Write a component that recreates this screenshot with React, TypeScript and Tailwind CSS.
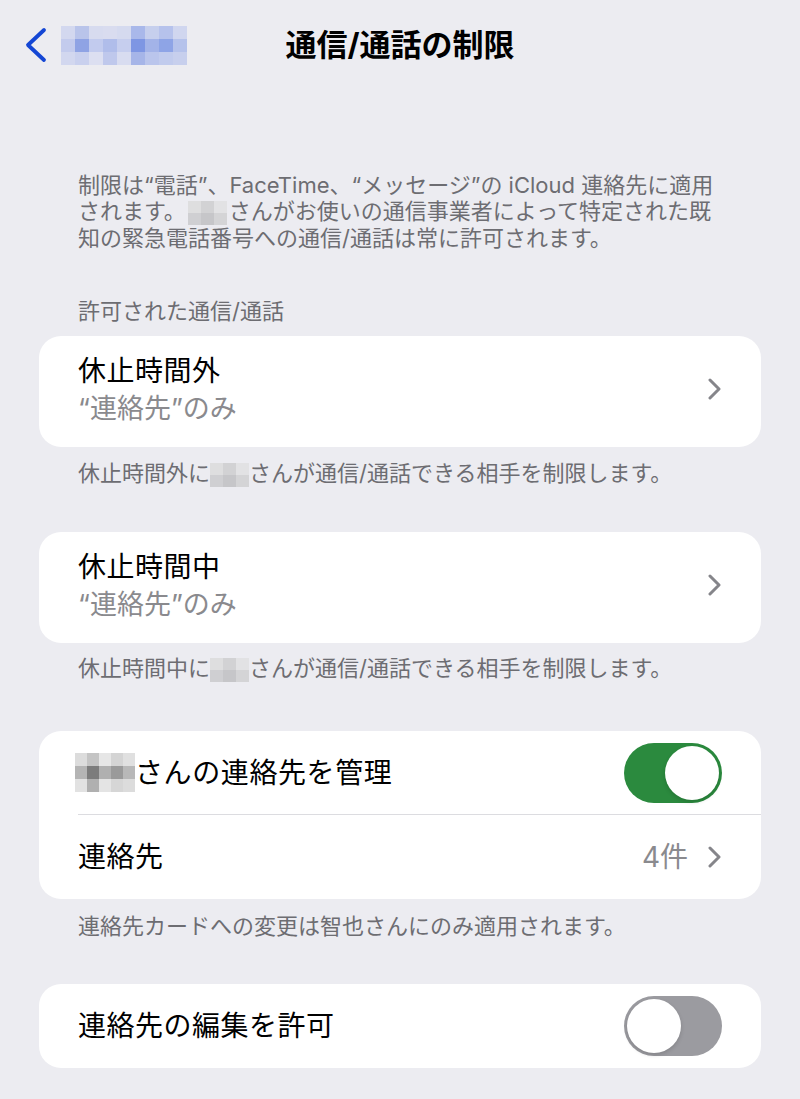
import React from 'react';

// Mosaic blocks used where a person's name is hidden
type Cells = string[][];

const navName: Cells = [
  ['#d3d8ef', '#b9c4ea', '#d7dbef', '#d9dcef', '#d5daef', '#a9b8ea', '#c6cfed', '#b6c2ec', '#d0d6ef'],
  ['#c3cbed', '#8fa3e4', '#c2cbee', '#b0bdea', '#c6ceee', '#7e96e3', '#a3b3e8', '#8ea4e6', '#b5c2eb'],
  ['#d2d7ef', '#c9d0ee', '#dcdff1', '#bfc8ec', '#d8dcf0', '#a6b5e8', '#bac5ec', '#c1cbed', '#c7cfed'],
];

const smallName: Cells = [
  ['#dededf', '#d2d2d4', '#e2e2e4'],
  ['#cfcfd2', '#c6c6c9', '#d4d4d6'],
];

const rowName: Cells = [
  ['#dcdcdc', '#c4c4c4', '#e6e6e6', '#d4d4d4', '#e0e0e0'],
  ['#b4b4b4', '#7c7c7c', '#b0b0b0', '#9a9a9a', '#b8b8b8'],
  ['#e2e2e2', '#b0b0b0', '#e4e4e4', '#d6d6d6', '#dcdcdc'],
];

const Mosaic: React.FC<{ cells: Cells; cw: number; ch: number; className?: string }> = ({ cells, cw, ch, className }) => (
  <span className={`inline-flex flex-col align-middle ${className ?? ''}`}>
    {cells.map((row, i) => (
      <span key={i} className="flex">
        {row.map((c, j) => (
          <span key={j} style={{ width: cw, height: ch, background: c }} />
        ))}
      </span>
    ))}
  </span>
);

const Chevron = () => (
  <svg width="13" height="22" viewBox="0 0 13 22" fill="none">
    <polyline points="2,2 11,11 2,20" stroke="#85858a" strokeWidth="3" strokeLinecap="round" strokeLinejoin="round" />
  </svg>
);

const Toggle: React.FC<{ on: boolean }> = ({ on }) => (
  <div className={`flex h-[60px] w-[98px] items-center rounded-full p-[3px] ${on ? 'justify-end bg-[#2b8a3e]' : 'justify-start bg-[#9b9ba0]'}`}>
    <div className="h-[54px] w-[54px] rounded-full bg-white shadow-[0_2px_4px_rgba(0,0,0,0.15)]" />
  </div>
);

const DowntimeCard: React.FC<{ title: string }> = ({ title }) => (
  <div className="flex items-center justify-between rounded-[22px] bg-white pl-[39px] pr-[40px] pt-[17px] pb-[22px]">
    <div>
      <div className="text-[28px] leading-[36px] tracking-[0.5px] text-black">{title}</div>
      <div className="mt-[4px] text-[27px] leading-[32px] text-[#8a8a8e]">“連絡先”のみ</div>
    </div>
    <Chevron />
  </div>
);

export default function App() {
  return (
    <div className="min-h-screen bg-[#ececf1] pb-[31px] font-['Inter','Noto_Sans_CJK_JP',sans-serif]">
      <header className="grid h-[90px] grid-cols-[1fr_auto_1fr] items-center">
        <div className="flex items-center pl-[24px]">
          <svg width="24" height="36" viewBox="0 0 24 36" fill="none">
            <polyline points="20,3 4,18 20,33" stroke="#1446d4" strokeWidth="3.8" strokeLinecap="round" strokeLinejoin="round" />
          </svg>
          <Mosaic cells={navName} cw={14} ch={13} className="ml-[13px]" />
        </div>
        <h1 className="text-[31px] font-bold leading-[36px] text-black">通信/通話の制限</h1>
        <div />
      </header>

      <main className="px-[39px]">
        <p className="mt-[82px] pl-[39px] text-[22px] leading-[26px] text-[#6d6d72]">
          制限は“電話”、FaceTime、“メッセージ”の iCloud 連絡先に適用
          <br />
          されます。
          <Mosaic cells={smallName} cw={13} ch={12} className="mx-[2px]" />
          さんがお使いの通信事業者によって特定された既
          <br />
          知の緊急電話番号への通信/通話は常に許可されます。
        </p>

        <p className="mt-[48px] mb-[13px] pl-[39px] text-[22px] leading-[24px] text-[#6d6d72]">許可された通信/通話</p>
        <DowntimeCard title="休止時間外" />
        <p className="mt-[13px] pl-[39px] text-[22px] leading-[26px] text-[#6d6d72]">
          休止時間外に<Mosaic cells={smallName} cw={13} ch={12} />さんが通信/通話できる相手を制限します。
        </p>

        <div className="mt-[45px]">
          <DowntimeCard title="休止時間中" />
        </div>
        <p className="mt-[12px] pl-[39px] text-[22px] leading-[26px] text-[#6d6d72]">
          休止時間中に<Mosaic cells={smallName} cw={13} ch={12} />さんが通信/通話できる相手を制限します。
        </p>

        <section className="mt-[49px] overflow-hidden rounded-[22px] bg-white">
          <div className="flex h-[83px] items-center justify-between pl-[36px] pr-[39px]">
            <span className="flex items-center text-[28px] tracking-[0.6px] text-black">
              <Mosaic cells={rowName} cw={12} ch={13} />
              さんの連絡先を管理
            </span>
            <Toggle on />
          </div>
          <div className="ml-[39px] h-px bg-[#dcdce0]" />
          <div className="flex h-[84px] items-center justify-between pl-[39px] pr-[40px]">
            <span className="text-[28px] tracking-[0.5px] text-black">連絡先</span>
            <span className="flex items-center gap-[20px] text-[28px] text-[#8a8a8e]">
              4件
              <Chevron />
            </span>
          </div>
        </section>
        <p className="mt-[14px] pl-[39px] text-[22px] leading-[26px] text-[#6d6d72]">
          連絡先カードへの変更は智也さんにのみ適用されます。
        </p>

        <section className="mt-[45px] flex h-[84px] items-center justify-between rounded-[22px] bg-white pl-[39px] pr-[39px]">
          <span className="text-[28px] tracking-[0.5px] text-black">連絡先の編集を許可</span>
          <Toggle on={false} />
        </section>
      </main>
    </div>
  );
}
